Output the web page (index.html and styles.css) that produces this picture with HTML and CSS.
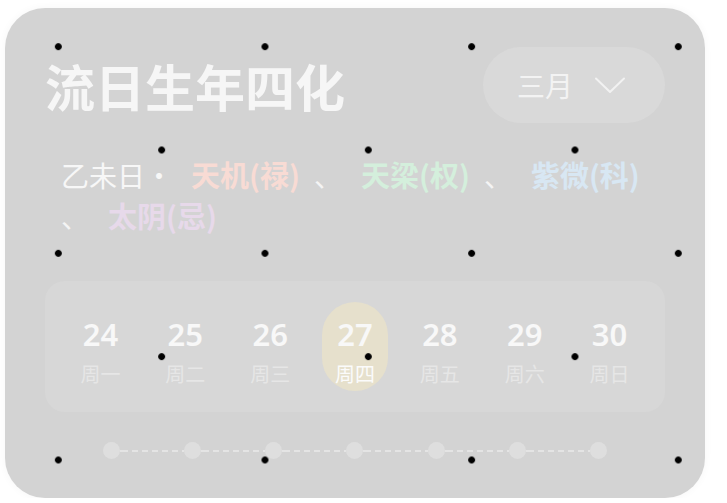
FILE: index.html
```html
<!DOCTYPE html>
<html lang="zh-CN">
<head>
<meta charset="utf-8">
<title>流日生年四化</title>
<link rel="stylesheet" href="styles.css">
</head>
<body>
<div class="card">
  <div class="header">
    <h1 class="title">流日生年四化</h1>
    <button class="month">
      <span>三月</span>
      <svg class="chev" width="30" height="17" viewBox="0 0 30 17"><path d="M1 1.5 L15 15 L29 1.5" fill="none" stroke="#f2f2f2" stroke-width="2" stroke-linecap="round" stroke-linejoin="round"/></svg>
    </button>
  </div>
  <div class="sihua">
    <span class="lead">乙未日・</span>
    <span class="star lu">天机(禄)</span>
    <span class="sep">、</span>
    <span class="star quan">天梁(权)</span>
    <span class="sep">、</span>
    <span class="star ke">紫微(科)</span>
    <span class="sep">、</span>
    <span class="star ji">太阴(忌)</span>
  </div>
  <div class="week">
    <div class="day"><div class="cell"><span class="num">24</span><span class="wd">周一</span></div></div>
    <div class="day"><div class="cell"><span class="num">25</span><span class="wd">周二</span></div></div>
    <div class="day"><div class="cell"><span class="num">26</span><span class="wd">周三</span></div></div>
    <div class="day"><div class="cell active"><span class="num">27</span><span class="wd">周四</span></div></div>
    <div class="day"><div class="cell"><span class="num">28</span><span class="wd">周五</span></div></div>
    <div class="day"><div class="cell"><span class="num">29</span><span class="wd">周六</span></div></div>
    <div class="day"><div class="cell"><span class="num">30</span><span class="wd">周日</span></div></div>
  </div>
  <div class="timeline">
    <span class="dot"></span><span class="seg"></span>
    <span class="dot"></span><span class="seg"></span>
    <span class="dot"></span><span class="seg"></span>
    <span class="dot"></span><span class="seg"></span>
    <span class="dot"></span><span class="seg"></span>
    <span class="dot"></span><span class="seg"></span>
    <span class="dot"></span>
  </div>
</div>
<div class="pins"></div>
</body>
</html>
```
FILE: styles.css
```css
html, body {
  margin: 0;
  padding: 0;
  background: #ffffff;
}
body {
  font-family: "Noto Sans", "Noto Sans CJK SC", sans-serif;
  padding: 8px 0 0 5px;
}
.card {
  box-sizing: border-box;
  width: 700px;
  height: 490px;
  background: #d3d3d3;
  border-radius: 40px;
  padding: 39px 40px 0 40px;
  box-shadow: 0 0 8px rgba(0, 0, 0, 0.04);
}
.header {
  display: flex;
  align-items: center;
  justify-content: space-between;
  height: 76px;
}
.title {
  margin: 0;
  font-family: "Noto Sans CJK SC", sans-serif;
  font-size: 50px;
  font-weight: 700;
  line-height: 76px;
  color: #f6f6f6;
}
.month {
  box-sizing: border-box;
  display: flex;
  align-items: center;
  gap: 22px;
  width: 182px;
  height: 76px;
  padding: 0 40px 0 34px;
  border: none;
  border-radius: 38px;
  background: #d9d9d9;
  font-family: "Noto Sans CJK SC", sans-serif;
  font-size: 28px;
  font-weight: 400;
  color: #f3f3f3;
  line-height: 1;
}
.chev {
  display: block;
  flex: none;
}
.sihua {
  display: flex;
  flex-wrap: wrap;
  align-items: baseline;
  margin-top: 31px;
  padding-left: 16px;
  font-family: "Noto Sans CJK SC", sans-serif;
  font-size: 28px;
  line-height: 40px;
  height: 80px;
}
.lead {
  color: #f7f7f7;
  margin-right: 18px;
}
.star {
  font-weight: 700;
  font-size: 29px;
  margin-right: 14px;
}
.sep {
  width: 28px;
  margin-right: 19px;
  color: #f4f4f4;
}
.lu { color: #f8dbd4; }
.quan { color: #d4efdc; }
.ke { color: #d8e7f3; }
.ji { color: #e7d9ea; }

.week {
  display: flex;
  margin-top: 47px;
  height: 131px;
  box-sizing: border-box;
  padding: 21px 13px;
  background: #d7d7d7;
  border-radius: 20px;
}
.day {
  flex: 1;
  display: flex;
  justify-content: center;
}
.cell {
  box-sizing: border-box;
  width: 66px;
  height: 89px;
  border-radius: 33px;
  padding-top: 12px;
  display: flex;
  flex-direction: column;
  align-items: center;
}
.cell.active {
  background: #e6e0cc;
}
.num {
  font-family: "Noto Sans", sans-serif;
  font-size: 31px;
  font-weight: 600;
  line-height: 40px;
  color: #f8f8f8;
}
.wd {
  margin-top: 7px;
  font-family: "Noto Sans CJK SC", sans-serif;
  font-size: 20px;
  line-height: 26px;
  color: #e6e6e6;
}
.active .wd {
  color: #fbfbfb;
}

.timeline {
  display: flex;
  align-items: center;
  width: 505px;
  margin: 30px auto 0;
  height: 17px;
}
.dot {
  flex: none;
  width: 17px;
  height: 17px;
  border-radius: 50%;
  background: #dedede;
}
.seg {
  flex: 1;
  height: 2px;
  background: repeating-linear-gradient(90deg, #e4e4e4 0 6px, transparent 6px 10px);
  background-position: 2px 0;
}

.pins {
  position: fixed;
  inset: 0;
  pointer-events: none;
  background-image:
    radial-gradient(circle, #000 3px, rgba(0,0,0,0) 3.8px),
    radial-gradient(circle, #000 3px, rgba(0,0,0,0) 3.8px);
  background-size: 206.67px 206.67px, 206.67px 206.67px;
  background-position: -45px -56.67px, 58.33px 46.67px;
}
```
